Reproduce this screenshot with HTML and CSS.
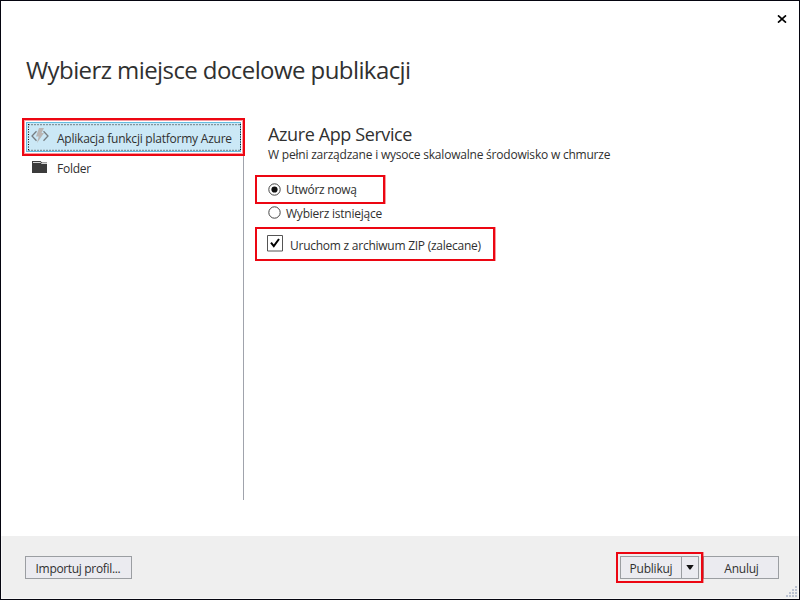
FILE: index.html
```html
<!DOCTYPE html>
<html lang="pl">
<head>
<meta charset="utf-8">
<title>Publikowanie</title>
<link rel="stylesheet" href="styles.css">
</head>
<body>
<div class="dialog">
  <header class="titlebar">
    <svg class="close" width="10" height="8" viewBox="0 0 10 8"><path d="M1 .4 9 7.6M9 .4 1 7.6" stroke="#000" stroke-width="1.7"/></svg>
  </header>
  <h1 class="title"><span>Wybierz miejsce docelowe publikacji</span></h1>
  <div class="content">
    <nav class="targets">
      <div class="highlight target-highlight">
        <div class="target selected">
          <svg class="icon" width="18" height="16" viewBox="0 0 18 16"><path d="M5.5 3.2 1 8l4.5 4.8M12.5 3.2 17 8l-4.5 4.8" fill="none" stroke="#777e82" stroke-width="1.3"/><path d="M8 0h5L10.5 5H13L6 15l1.7-6.5H5z" fill="#b9b5b3"/></svg>
          <span class="t-azure">Aplikacja funkcji platformy Azure</span>
          <svg class="focus" width="213" height="27" viewBox="0 0 213 27"><path d="M0 .5H213M0 26.5H213" stroke="#84959d" stroke-width="1.4" stroke-dasharray="2 1"/><path d="M.5 0V27M212.5 0V27" stroke="#111" stroke-dasharray="1 1.5"/></svg>
        </div>
      </div>
      <div class="target folder">
        <svg class="icon" width="15" height="13" viewBox="0 0 15 13"><path d="M0 1h8.5l1.5 1.5h5V13H0z" fill="#3b3b3b"/><path d="M1 2.5h7.5l1 1H15" fill="none" stroke="#d5d5d5"/></svg>
        <span class="t-folder">Folder</span>
      </div>
    </nav>
    <main class="details">
      <h2 class="service"><span>Azure App Service</span></h2>
      <p class="description"><span>W pełni zarządzane i wysoce skalowalne środowisko w chmurze</span></p>
      <div class="highlight option create">
        <svg width="13" height="13" viewBox="0 0 13 13"><circle cx="6.5" cy="6.5" r="5.7" fill="#fff" stroke="#444"/><circle cx="6.5" cy="6.5" r="3.1" fill="#111"/></svg>
        <span class="t-create">Utwórz nową</span>
      </div>
      <div class="option existing">
        <svg width="13" height="13" viewBox="0 0 13 13"><circle cx="6.5" cy="6.5" r="5.7" fill="#fff" stroke="#444"/></svg>
        <span class="t-existing">Wybierz istniejące</span>
      </div>
      <div class="highlight option zip">
        <svg width="16" height="17" viewBox="0 0 16 17"><path d="M.5 .5h15v15.5H.5z" fill="#fff" stroke="#555"/><path d="M4 7.6 6.8 11.2 12 4" fill="none" stroke="#000" stroke-width="2"/></svg>
        <span class="t-zip">Uruchom z archiwum ZIP (zalecane)</span>
      </div>
    </main>
  </div>
  <footer class="footer">
    <div class="button import"><span class="t-import">Importuj profil...</span></div>
    <div class="highlight publish-highlight">
      <div class="button publish"><span class="label"><span class="t-publish">Publikuj</span></span><span class="drop"><svg width="8" height="5" viewBox="0 0 8 5"><path d="M.3 0h7.4L4.6 4.5H3.4z" fill="#111"/></svg></span></div>
    </div>
    <div class="button cancel"><span class="t-cancel">Anuluj</span></div>
    <svg class="grip" width="12" height="12" viewBox="0 0 12 12"><path d="M9 1h2M9 4h2M9 7h2M9 10h2M6 4h2M6 7h2M6 10h2M3 7h2M3 10h2M0 10h2" stroke="#aab4c8" stroke-width="1.5"/></svg>
  </footer>
</div>
</body>
</html>
```
FILE: styles.css
```css
* { box-sizing: border-box; }
body { margin: 0; }
svg { display: block; flex: none; }
.dialog {
  width: 800px;
  height: 600px;
  border: 1px solid #05050f;
  background: #fff;
  color: #303030;
  font: 12px/16px "Open Sans", "Noto Sans", sans-serif;
  letter-spacing: -0.23px;
  display: flex;
  flex-direction: column;
  white-space: nowrap;
  overflow: hidden;
}
.titlebar { height: 38px; display: flex; justify-content: flex-end; padding: 14px 12px 0 0; }
.title { margin: 0; height: 79px; padding: 15px 0 0 25px; font-size: 24px; line-height: 32px; font-weight: 400; letter-spacing: -0.58px; }
.content { flex: 1; display: flex; }
.targets { width: 243px; height: 382px; position: relative; padding-left: 21px; border-right: 1px solid #a0a3ac; }
.highlight { border: 2px solid #ec0612; box-shadow: 1px 0 0 rgba(236, 6, 18, 0.4); }
.target-highlight { width: 223px; height: 38px; padding: 2px; background: #fff; box-shadow: inset 0 0 0 1px rgba(236, 6, 18, 0.4); }
.target { display: flex; align-items: center; }
.selected { position: relative; height: 30px; border: 1px solid #65bce0; background: #cbe8f6; padding-left: 4px; }
.selected .icon { margin: -2px 8px 0 0; }
.t-azure { padding-top: 4px; }
.focus { position: absolute; left: 1px; top: 1px; }
.folder { height: 24px; padding-left: 10px; }
.folder .icon { margin: -4px 10px 0 0; }
.t-folder { padding-top: 2px; }
.details { padding-left: 11px; }
.service { margin: 0 0 0 13px; padding-top: 3px; font-size: 18px; line-height: 26px; font-weight: 400; letter-spacing: -0.39px; }
.description { margin: 0 0 0 13px; height: 28px; letter-spacing: -0.21px; }
.option { display: flex; align-items: center; }
.create { width: 130px; height: 29px; padding-left: 11px; gap: 5px; padding-bottom: 1px; }
.t-create { padding-top: 2px; letter-spacing: -0.27px; }
.existing { height: 18px; padding-left: 13px; gap: 5px; margin-bottom: 5px; padding-bottom: 1px; }
.t-existing { padding-top: 3px; }
.zip { width: 240px; height: 34px; padding-left: 10px; gap: 7px; padding-bottom: 1px; }
.t-zip { padding-top: 4px; letter-spacing: -0.25px; }
.footer { height: 63px; background: #efefef; border: 1px solid #f7f7f7; border-top: 0; display: flex; align-items: flex-start; position: relative; padding: 16px 0 0 23px; }
.button { height: 23px; margin-top: 4px; border: 1px solid #9b9ea2; background: #ebebf0; display: flex; align-items: center; justify-content: center; }
.import { width: 107px; }
.t-import { letter-spacing: -0.33px; padding: 3px 1px 0 0; }
.publish-highlight { width: 87px; height: 31px; margin-left: 484px; padding: 2px; z-index: 1; }
.publish { width: 79px; margin: 0; }
.label { flex: 1; display: flex; justify-content: center; padding-top: 3px; }
.drop { width: 17px; height: 21px; border-left: 1px solid #9b9ea2; display: flex; justify-content: center; padding-top: 8px; }
.cancel { width: 76px; }
.t-cancel { padding: 3px 0 0 1px; }
.grip { position: absolute; right: 0; bottom: 0; }
```
